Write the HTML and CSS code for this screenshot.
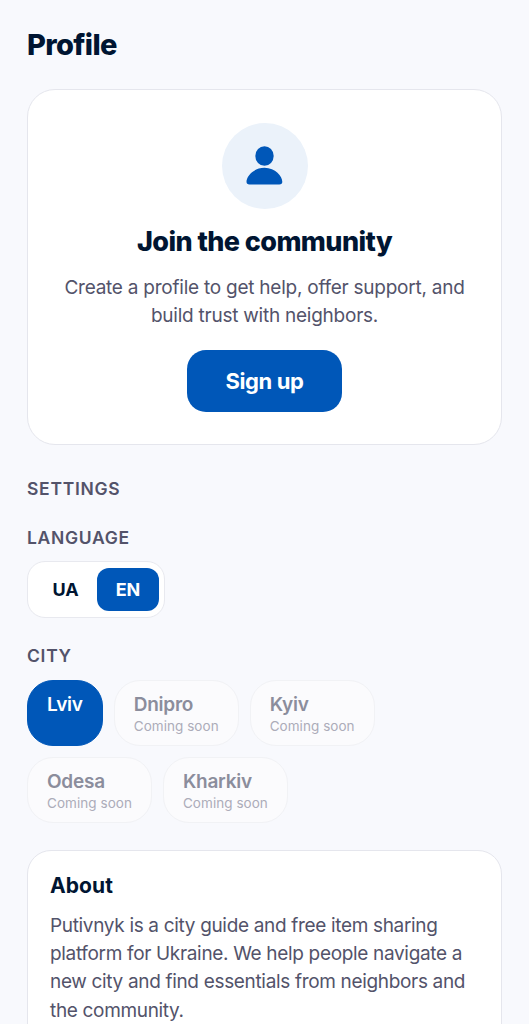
FILE: index.html
```html
<!DOCTYPE html>
<html lang="en">
<head>
<meta charset="utf-8">
<title>Profile</title>
<link rel="stylesheet" href="styles.css">
</head>
<body>
<main class="page">
  <h1 class="title"><span>Profile</span></h1>
  <section class="join">
    <div class="avatar">
      <svg width="86" height="86" viewBox="0 0 86 86" fill="#0057b8"><ellipse cx="42.500" cy="33" rx="9.200" ry="9.800"/><path d="M27.500 61.400c-2 0-3-1-3-2.700C24.500 53.500 31.500 44.800 42.500 44.800s17.800 8.700 17.800 13.900c0 1.700-1 2.700-3 2.700z"/></svg>
    </div>
    <h2 class="join-title"><span>Join the community</span></h2>
    <p class="join-text"><span>Create a profile to get help, offer support, and</span><br><span>build trust with neighbors.</span></p>
    <button class="signup"><span>Sign up</span></button>
  </section>
  <h3 class="label settings"><span>SETTINGS</span></h3>
  <h3 class="label language"><span>LANGUAGE</span></h3>
  <div class="segments"><button class="segment"><span>UA</span></button><button class="segment active"><span>EN</span></button></div>
  <h3 class="label city-label"><span>CITY</span></h3>
  <div class="cities">
    <button class="city selected"><b>Lviv</b></button>
    <button class="city"><b>Dnipro</b><small>Coming soon</small></button>
    <button class="city"><b>Kyiv</b><small>Coming soon</small></button>
    <button class="city"><b>Odesa</b><small>Coming soon</small></button>
    <button class="city"><b>Kharkiv</b><small>Coming soon</small></button>
  </div>
  <section class="about">
    <h2><span>About</span></h2>
    <p><span>Putivnyk is a city guide and free item sharing</span><br><span>platform for Ukraine. We help people navigate a</span><br><span>new city and find essentials from neighbors and</span><br><span>the community.</span></p>
  </section>
</main>
</body>
</html>
```
FILE: styles.css
```css
* { box-sizing: border-box; }
html { overflow: hidden; }
body { margin: 0; background: #f8f9fd; font-family: Inter, sans-serif; color: #001532; height: 1024px; overflow: hidden; }
h1, h2, h3, p { margin: 0; }
button { font: inherit; color: inherit; margin: 0; padding: 0; border: 0; background: none; }
.page { padding: 27px 27px 0; }
.title { height: 36px; line-height: 36px; font-size: 29px; font-weight: 800; letter-spacing: -0.65px; }
.join { margin-top: 26px; height: 356px; border: 1px solid #e5e6ed; border-radius: 28px; background: #fff; display: flex; flex-direction: column; align-items: center; padding-top: 33px; }
.avatar { width: 86px; height: 86px; border-radius: 50%; background: #ebf2fa; }
.avatar svg { display: block; }
.join-title { margin-top: 16px; height: 34px; line-height: 34px; font-size: 27px; font-weight: 800; letter-spacing: -0.58px; white-space: nowrap; }
.join-text { margin-top: 15px; text-align: center; color: #53536a; font-size: 19px; line-height: 28px; letter-spacing: -0.24px; white-space: nowrap; }
.signup { margin-top: 20px; width: 155px; height: 62px; border-radius: 19px; background: #0057b8; color: #fff; font-size: 22px; font-weight: 700; letter-spacing: -0.4px; }
.label { height: 24px; line-height: 24px; color: #53536a; font-size: 17.5px; font-weight: 600; letter-spacing: 0.7px; }
.settings { margin-top: 32px; }
.language { margin-top: 25px; }
.segments { margin-top: 11px; width: 138px; height: 57px; display: flex; padding: 6px; border: 1px solid #e8e9ef; border-radius: 18px; background: #fff; }
.segment { flex: none; width: 63px; height: 43px; border-radius: 12px; font-size: 18px; line-height: 44px; font-weight: 700; letter-spacing: -0.2px; }
.segment.active { width: 62px; background: #0057b8; color: #fff; }
.city-label { margin-top: 26px; }
.cities { margin-top: 12px; display: flex; flex-wrap: wrap; gap: 11px; width: 360px; }
.city { height: 66px; padding: 11px 19px; border: 1px solid #f1f2f5; border-radius: 26px; background: #fbfbfd; color: #8b8d9c; text-align: left; display: flex; flex-direction: column; }
.city b { font-size: 19px; line-height: 25px; font-weight: 600; letter-spacing: -0.25px; }
.city small { font-size: 13.5px; line-height: 18px; color: #acacb9; letter-spacing: 0.05px; }
.city.selected { background: #0057b8; border-color: #0057b8; color: #fff; }
.about { margin-top: 27px; height: 220px; border: 1px solid #e5e6ed; border-radius: 24px; background: #fff; padding: 21px 22px; }
.about h2 { font-size: 21px; line-height: 28px; font-weight: 700; letter-spacing: 0.1px; }
.about p { margin-top: 12px; color: #53536a; font-size: 19px; line-height: 28.2px; letter-spacing: -0.33px; white-space: nowrap; }
```
